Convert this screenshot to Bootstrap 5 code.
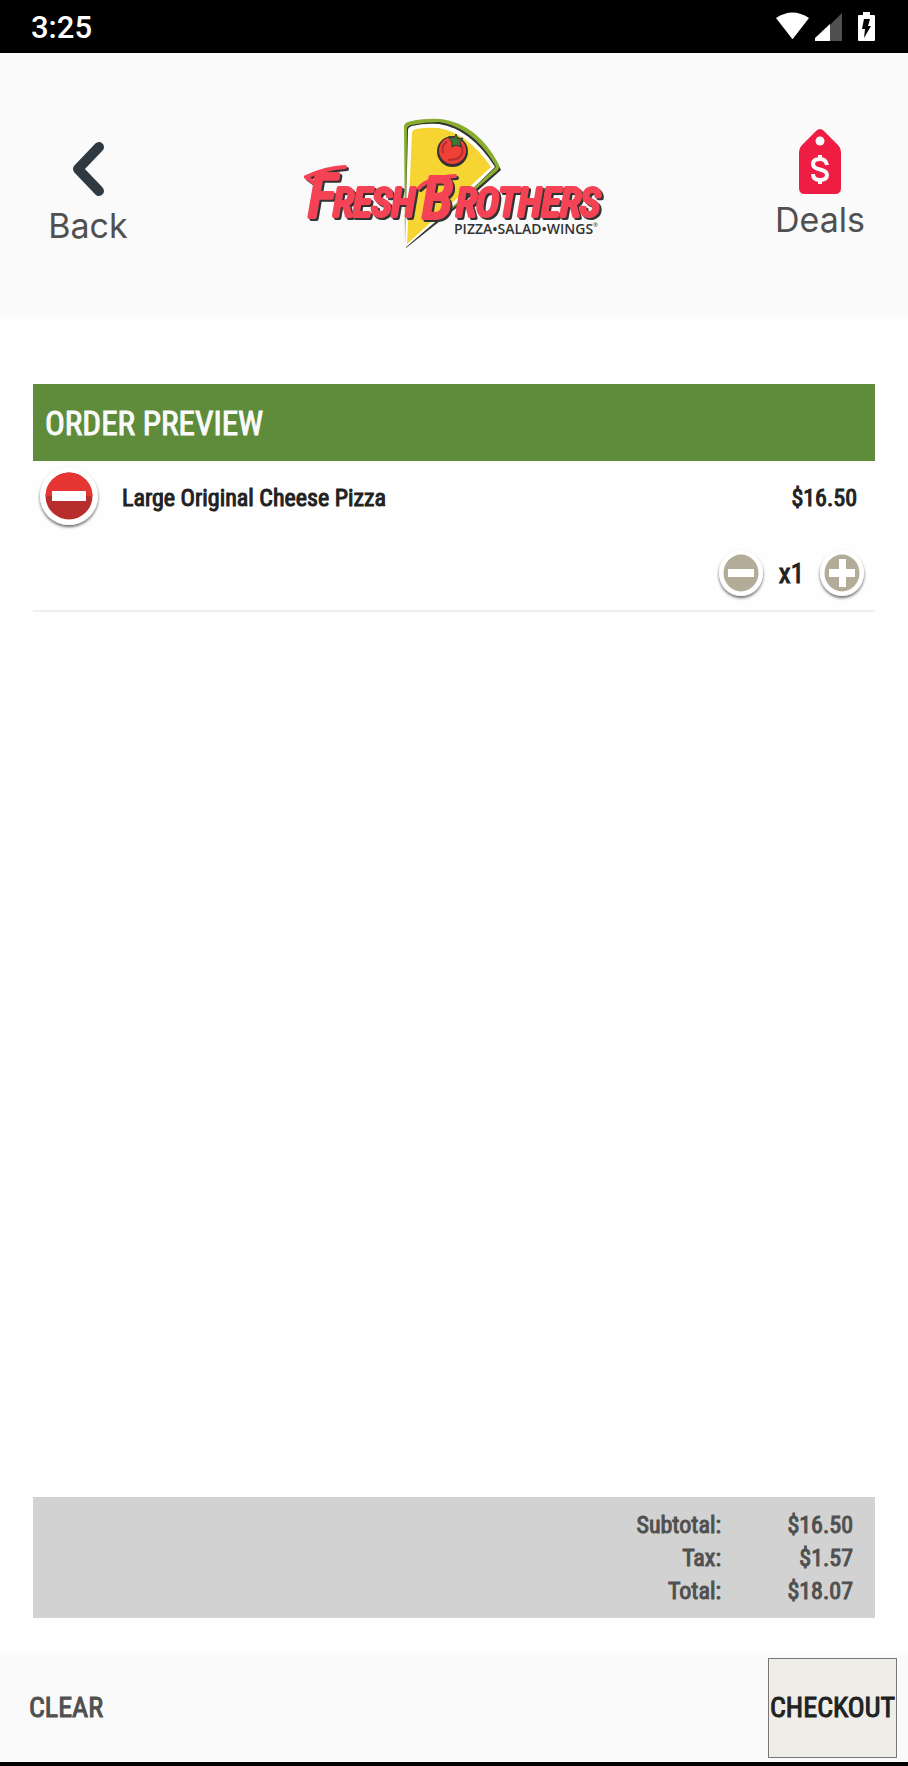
<!DOCTYPE html>
<html lang="en">
<head>
<meta charset="utf-8">
<meta name="viewport" content="width=device-width, initial-scale=1">
<title>Fresh Brothers – Order Preview</title>
<link href="https://cdn.jsdelivr.net/npm/bootstrap@5.3.0/dist/css/bootstrap.min.css" rel="stylesheet">
<style>
  body { font-family: "Roboto Condensed", "Liberation Sans Narrow", Roboto, sans-serif; color: #212121; background: #fefefe; }
  svg { display: block; }
  .status-bar { height: 53px; padding: 0 32px 0 31px; background: #000; color: #fff; font: 500 31px/55px Roboto, sans-serif; }
  .app-header { height: 264px; padding: 0 38px; background: #fafafa; }
  .header-link { width: 100px; margin-top: 75px; font: 400 34px/40px Inter, sans-serif; color: #505050; text-decoration: none; }
  .header-logo { margin-top: 52px; }
  .order { padding: 67px 33px 35px; }
  .heavy { font-weight: 400; -webkit-text-stroke: 1px currentColor; }
  .order-title { height: 77px; padding: 0 12px; font-size: 33px; line-height: 79px; background: #5e8c3b; color: #fafafa; }
  .order-line { height: 151px; border-bottom: 2px solid #f0f0ea; }
  .line-main { height: 73px; padding: 0 18px 0 3px; font-size: 24px; }
  .line-qty { height: 80px; padding: 0 8px; font-size: 27px; gap: 13px; }
  .icon-btn { padding: 0; border: 0; background: none; }
  .totals { padding: 12px 22px 10px; background: #d2d2d2; color: #505050; font-size: 24px; line-height: 33px; }
  .totals th { font-weight: 400; }
  .totals td { width: 132px; }
  .totals th, .totals td { padding: 0; text-align: right; }
  .bottom-bar { height: 113px; padding: 5px 11px 4px 29px; background: #fafafa; border-bottom: 4px solid #000; font-size: 28px; }
  .clear-btn { padding: 0; border: 0; background: none; color: #505050; }
  .checkout-btn { width: 129px; height: 100px; padding: 0; border: 1px solid #777; background: #eeede8; color: #212121; white-space: nowrap; }
  .brand-lettering { font-family: "Roboto Condensed", Roboto, sans-serif; font-style: italic; font-weight: 400; stroke-width: 4px; stroke-linejoin: round; stroke-linecap: round; fill: #f44354; stroke: #f44354; filter: drop-shadow(2px 2px 0 #333); }
</style>
</head>
<body>
<div class="d-flex flex-column min-vh-100">
  <div class="status-bar d-flex justify-content-between">
    <span>3:25</span>
    <svg width="100" height="53" viewBox="0 0 100 53" aria-hidden="true">
      <path d="M0 18Q16.500 7 33 18L17.500 38Q16.500 40 15.500 38Z" fill="#fff"/>
      <path d="M66 13V41H54V25Z" fill="#505050"/>
      <path d="M54 24V41H39V38Z" fill="#fff"/>
      <path d="M87 12h7v3h4q1 0 1 1v24q0 1-1 1H83q-1 0-1-1V16q0-1 1-1h4Z" fill="#fff"/>
      <path d="M88 19h6l-2 7h3l-7 12 1-9h-3Z" fill="#000"/>
    </svg>
  </div>

  <header class="app-header d-flex justify-content-between align-items-start">
    <a href="#" class="header-link d-flex flex-column align-items-center">
      <svg width="40" height="78" viewBox="0 0 40 78" aria-hidden="true"><path d="M31 19L10 41L31 63" fill="none" stroke="#2f3942" stroke-width="10" stroke-linecap="round" stroke-linejoin="round"/></svg>
      Back
    </a>
    <svg class="header-logo" width="330" height="155" viewBox="0 0 330 155" role="img" aria-label="Fresh Brothers Pizza Salad Wings">
      <path d="M116 20Q121 14 150 15Q187 20 210 61L212 65L185 89L117 143Z" fill="#333"/>
      <path d="M115 22Q115 18 119 17Q134 13 152 14Q188 19 209 58Q212 62 208 66L180 90L116 142Z" fill="#8aad2f"/>
      <path d="M118 24Q118 21 122 20Q136 17 150 17Q183 22 205 58L207 62L179 88L117 141Z" fill="#333"/>
      <path d="M119 25Q119 22 123 21Q136 18 150 19Q182 24 206 62L179 88L116 143Z" fill="#fff"/>
      <path d="M123 28Q123 25 127 24Q138 22 149 23Q178 27 202 62L175 87L118 139Z" fill="#f6d533"/>
      <circle cx="163.500" cy="46.500" r="15.500" fill="#333"/>
      <circle cx="163.500" cy="45.500" r="13.500" fill="#ef4135"/>
      <path d="M172 39Q178 55 159 55M154 48Q152 40 158 37" fill="none" stroke="#b82d2e" stroke-width="2"/>
      <path d="M159 32l6 1 2-4 2 5 5-1-3 4 1 5-5-2-4 2v-5Z" fill="#3c7a33" stroke="#333"/>
      <g class="brand-lettering">
        <path d="M17 72Q36 63 56 62M17 72L24 77M130 83Q140 72 166 71" fill="none"/>
        <text font-size="60" x="19" y="112">F</text>
        <text font-size="39" x="44" y="111">RESH</text>
        <text font-size="58" x="133" y="113">B</text>
        <text font-size="39" x="167" y="111">ROTHERS</text>
      </g>
      <g fill="#333" font-family="'Open Sans',sans-serif"><text x="165" y="129" font-size="14" font-weight="600">PIZZA•SALAD•WINGS</text><text x="304" y="122" font-size="6">®</text></g>
    </svg>
    <a href="#" class="header-link d-flex flex-column align-items-center">
      <svg width="44" height="72" viewBox="0 0 44 72" aria-hidden="true">
        <path d="M17 4Q22-2 27 4L40 17Q43 20 43 24V60Q43 66 37 66H7Q1 66 1 60V24Q1 20 4 17Z" fill="#ef1d43"/>
        <circle cx="22" cy="13" r="4.500" fill="#fafafa"/>
        <path d="M22 27V32M22 51V56M29 37Q28 31 22 31Q15 31 15 36Q15 40 22 41.500Q29 43 29 47Q29 52 22 52Q15 52 15 46" fill="none" stroke="#fafafa" stroke-width="4"/>
      </svg>
      Deals
    </a>
  </header>

  <main class="order d-flex flex-column flex-grow-1">
    <h1 class="order-title heavy m-0">ORDER PREVIEW</h1>
    <div class="order-line heavy">
      <div class="line-main d-flex align-items-center">
        <button class="icon-btn" type="button" aria-label="Remove item">
          <svg width="66" height="68" viewBox="0 0 66 68">
            <defs><filter id="soft" x="-20%" y="-20%" width="140%" height="150%"><feDropShadow dx="0" dy="2" stdDeviation="1.500" flood-color="#000" flood-opacity=".6"/></filter></defs>
            <circle cx="33" cy="32" r="29" fill="#fff" filter="url(#soft)"/>
            <circle cx="33" cy="32" r="23.500" fill="#b82e2d"/><path d="M9.500 32a23.500 23.500 0 0 1 47 0Z" fill="#e53633"/>
            <path d="M16 27h34v10H16Z" fill="#fff"/>
          </svg>
        </button>
        <span class="ms-3 ps-1">Large Original Cheese Pizza</span>
        <span class="ms-auto">$16.50</span>
      </div>
      <div class="line-qty d-flex align-items-center justify-content-end">
        <button class="icon-btn" type="button" aria-label="Decrease quantity">
          <svg width="50" height="54" viewBox="0 0 50 54"><ellipse cx="25" cy="26" rx="22" ry="23" fill="#fff" filter="url(#soft)"/><ellipse cx="25" cy="26" rx="17.500" ry="18.500" fill="#b3ac99"/><path d="M12 22h26v8H12Z" fill="#fff"/></svg>
        </button>
        <span>x1</span>
        <button class="icon-btn" type="button" aria-label="Increase quantity">
          <svg width="50" height="54" viewBox="0 0 50 54"><ellipse cx="25" cy="26" rx="22" ry="23" fill="#fff" filter="url(#soft)"/><ellipse cx="25" cy="26" rx="17.500" ry="18.500" fill="#b3ac99"/><path d="M22 12h7v10h9v8h-9v10h-7V30h-10v-8h10Z" fill="#fff"/></svg>
        </button>
      </div>
    </div>
    <div class="totals heavy mt-auto d-flex justify-content-end">
      <table>
        <tr><th scope="row">Subtotal:</th><td>$16.50</td></tr>
        <tr><th scope="row">Tax:</th><td>$1.57</td></tr>
        <tr><th scope="row">Total:</th><td>$18.07</td></tr>
      </table>
    </div>
  </main>

  <footer class="bottom-bar d-flex justify-content-between align-items-center">
    <button class="clear-btn heavy" type="button">CLEAR</button>
    <button class="checkout-btn heavy" type="button">CHECKOUT</button>
  </footer>
</div>
<script src="https://cdn.jsdelivr.net/npm/bootstrap@5.3.0/dist/js/bootstrap.bundle.min.js"></script>
</body>
</html>
